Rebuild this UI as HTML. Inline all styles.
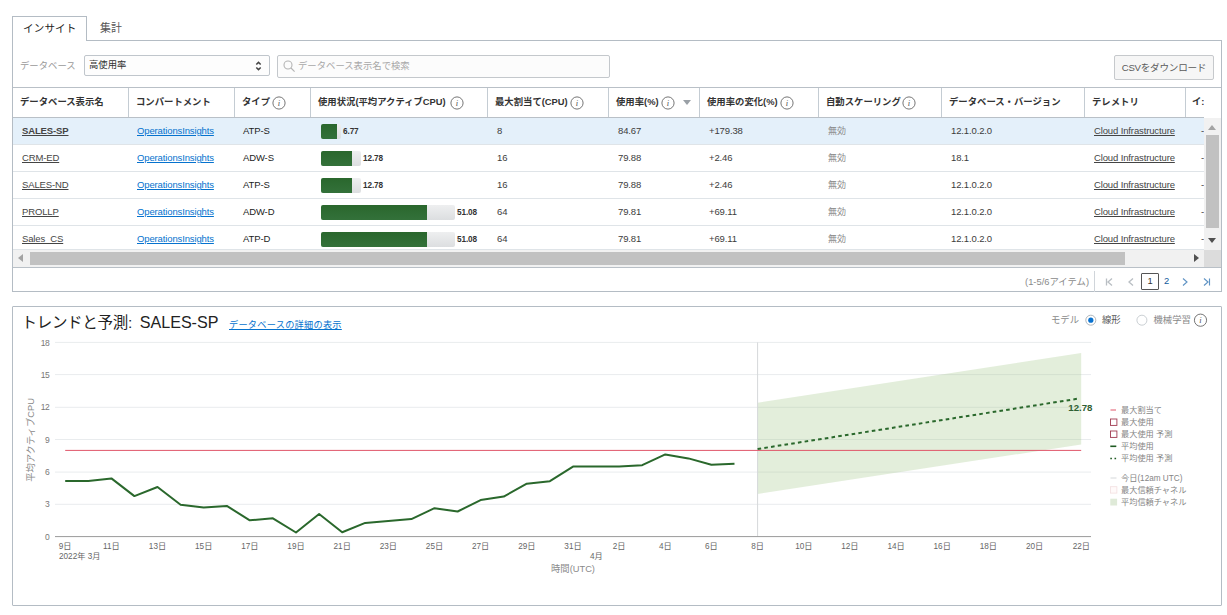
<!DOCTYPE html>
<html lang="ja">
<head>
<meta charset="utf-8">
<title>トレンドと予測</title>
<style>
*{box-sizing:border-box;margin:0;padding:0}
html,body{width:1227px;height:615px;background:#fff;overflow:hidden}
body{font-family:"Liberation Sans","Noto Sans CJK JP",sans-serif;font-size:9.35px;color:#333;position:relative}
.abs{position:absolute}
a{color:#0572ce;text-decoration:underline}
/* tabs */
#tab1{left:12px;top:16px;width:75px;height:25px;border:1px solid #b4bcc4;border-bottom:none;background:#fff;z-index:3;font-size:10.6px;color:#222;line-height:22px;padding-left:10px;letter-spacing:.1px}
#tab2{left:100px;top:16px;height:25px;font-size:10.9px;color:#555;line-height:24px}
#panel1{left:12px;top:40px;width:1210px;height:252px;border:1px solid #b4bcc4;background:#fff}
/* toolbar */
#lblDb{left:20px;top:59px;color:#9a9a9a;font-size:9.35px;line-height:14px}
#sel{left:84px;top:55px;width:186px;height:21px;border:1px solid #c0c6cc;border-radius:2px;background:#fdfdfd;font-size:9.35px;line-height:19px;padding-left:4px;color:#333}
#search{left:277px;top:55px;width:333px;height:23px;border:1px solid #c4c8cc;border-radius:2px;background:#fcfcfc;font-size:9.35px;line-height:21px;color:#a8a8a8;padding-left:20px}
#csv{left:1114px;top:55px;width:100px;height:25px;border:1px solid #c6c9cc;border-radius:2px;background:#f6f6f6;font-size:9.6px;letter-spacing:-.25px;line-height:23px;color:#5a5a5a;text-align:center}
/* table */
#thead{left:13px;top:87px;width:1191px;height:31px;border-top:1px solid #b9c0c7;border-bottom:1px solid #b9c0c7;background:#fff}
#theadtop{left:1204px;top:87px;width:17px;height:1px;background:#b9c0c7}
.th{position:absolute;top:0;height:29px;line-height:29px;font-weight:bold;font-size:9.35px;color:#333;border-left:1px solid #c4ccd3;padding-left:7px;white-space:nowrap;overflow:hidden}
.row{position:absolute;left:13px;width:1191px;height:27px;border-bottom:1px solid #dfe4e8;overflow:hidden}
.row.sel{background:#e4f0fa}
.td{position:absolute;top:0;height:26px;line-height:26px;white-space:nowrap;font-size:9.5px;letter-spacing:-.13px;color:#3c3c3c}
.td a.nm{color:#444}
.gray{color:#8a8a8a;font-size:9px;letter-spacing:0}
.bar{position:absolute;top:5.5px;height:15px;border-radius:2px;background:linear-gradient(#eeeff0,#dcdee0);overflow:hidden}
.bar i{position:absolute;left:0;top:0;bottom:0;background:linear-gradient(#2a672d,#33713a);display:block}
.bv{position:absolute;top:1px;font-weight:bold;font-size:8.2px;letter-spacing:-.1px;color:#333;line-height:26px}

/* scrollbars */
#vsb{left:1204px;top:118px;width:17px;height:132px;background:#f1f1f1}
#vsb .thumb{position:absolute;left:2px;top:17px;width:13px;height:93px;background:#c1c1c1}
#hsb{left:13px;top:250px;width:1191px;height:17px;background:#f1f1f1}
#hsb .thumb{position:absolute;left:17px;top:2px;width:1095px;height:13px;background:#c1c1c1}
#corner{left:1204px;top:250px;width:17px;height:17px;background:#dcdcdc}
.arr{position:absolute;width:0;height:0;border:4px solid transparent}
#pgline{left:13px;top:267px;width:1208px;height:1px;background:#b9c0c7}
#pgsep{left:1094px;top:271px;width:1px;height:21px;background:#d0d5da}
#pgtxt{left:1000px;top:275px;width:89px;text-align:right;color:#8a8a8a;font-size:9.35px;line-height:14px;white-space:nowrap}
#pg1{left:1141px;top:273px;width:18px;height:17px;border:1px solid #555;border-radius:1px;text-align:center;line-height:15px;font-size:9.35px;color:#333;background:#fff}
#pg2{left:1164px;top:273px;width:8px;line-height:17px;font-size:9.35px;color:#0f5b9c}
.ico{position:absolute}
#panel2{left:12px;top:306px;width:1210px;height:300px;border:1px solid #b4bcc4;background:#fff;border-radius:1px}
#ctitle{left:21.5px;top:311px;font-size:15.5px;line-height:22px;color:#222;white-space:nowrap}
#ctitle span{letter-spacing:-0.3px}
#ctitle em{font-style:normal;font-size:16.1px;margin-left:3.5px}
#clink{left:229px;top:318px;font-size:9.2px;line-height:14px;white-space:nowrap;letter-spacing:.25px}
#mdl{left:1051px;top:313px;color:#8a8a8a;line-height:14px;white-space:nowrap}
#r1t{left:1102px;top:313px;color:#555;line-height:14px;white-space:nowrap}
#r2t{left:1153.5px;top:313px;color:#8a8a8a;line-height:14px;white-space:nowrap}
/*ENDCHARTCSS*/
</style>
</head>
<body>
<div class="abs" id="tab1">インサイト</div>
<div class="abs" id="tab2">集計</div>
<div class="abs" id="panel1"></div>
<div class="abs" id="lblDb">データベース</div>
<div class="abs" id="sel">高使用率</div>
<div class="abs" id="search">データベース表示名で検索</div>
<div class="abs" id="csv">CSVをダウンロード</div>
<div class="abs" id="theadtop"></div>
<div class="abs" id="thead">
<div class="th" style="left:0;width:115px;border-left:none">データベース表示名</div>
<div class="th" style="left:115px;width:106px">コンパートメント</div>
<div class="th" style="left:221px;width:76px">タイプ</div>
<div class="th" style="left:297px;width:177px">使用状況(平均アクティブCPU)</div>
<div class="th" style="left:474px;width:121px">最大割当て(CPU)</div>
<div class="th" style="left:595px;width:91px">使用率(%)</div>
<div class="th" style="left:686px;width:119px">使用率の変化(%)</div>
<div class="th" style="left:805px;width:123px">自動スケーリング</div>
<div class="th" style="left:928px;width:143px">データベース・バージョン</div>
<div class="th" style="left:1071px;width:102px">テレメトリ</div>
<div class="th" style="left:1172px;width:19px;padding-left:6px">イ:</div>
</div>
<svg class="ico" style="left:272.4px;top:95.5px" width="14" height="14" viewBox="0 0 14 14"><circle cx="7" cy="7" r="6.1" fill="#fff" stroke="#666" stroke-width="0.9"/><text x="7" y="9.9" text-anchor="middle" font-family="Liberation Serif,serif" font-style="italic" font-size="8.5" fill="#555">i</text></svg>
<svg class="ico" style="left:449.6px;top:95.5px" width="14" height="14" viewBox="0 0 14 14"><circle cx="7" cy="7" r="6.1" fill="#fff" stroke="#666" stroke-width="0.9"/><text x="7" y="9.9" text-anchor="middle" font-family="Liberation Serif,serif" font-style="italic" font-size="8.5" fill="#555">i</text></svg>
<svg class="ico" style="left:570.4px;top:95.5px" width="14" height="14" viewBox="0 0 14 14"><circle cx="7" cy="7" r="6.1" fill="#fff" stroke="#666" stroke-width="0.9"/><text x="7" y="9.9" text-anchor="middle" font-family="Liberation Serif,serif" font-style="italic" font-size="8.5" fill="#555">i</text></svg>
<svg class="ico" style="left:660.5px;top:95.5px" width="14" height="14" viewBox="0 0 14 14"><circle cx="7" cy="7" r="6.1" fill="#fff" stroke="#666" stroke-width="0.9"/><text x="7" y="9.9" text-anchor="middle" font-family="Liberation Serif,serif" font-style="italic" font-size="8.5" fill="#555">i</text></svg>
<svg class="ico" style="left:780px;top:95.5px" width="14" height="14" viewBox="0 0 14 14"><circle cx="7" cy="7" r="6.1" fill="#fff" stroke="#666" stroke-width="0.9"/><text x="7" y="9.9" text-anchor="middle" font-family="Liberation Serif,serif" font-style="italic" font-size="8.5" fill="#555">i</text></svg>
<svg class="ico" style="left:901.6px;top:95.5px" width="14" height="14" viewBox="0 0 14 14"><circle cx="7" cy="7" r="6.1" fill="#fff" stroke="#666" stroke-width="0.9"/><text x="7" y="9.9" text-anchor="middle" font-family="Liberation Serif,serif" font-style="italic" font-size="8.5" fill="#555">i</text></svg>
<div class="arr abs" style="left:683px;top:100px;border-top:5px solid #9aa0a6;border-bottom:none"></div>
<svg class="ico" style="left:254px;top:60px" width="9" height="12" viewBox="0 0 9 12" fill="none" stroke="#444" stroke-width="1.5"><path d="M2.3 4.5L4.5 2.4l2.2 2.1M2.3 7.5L4.5 9.6l2.2-2.1"/></svg>
<svg class="ico" style="left:282px;top:59px" width="14" height="14" viewBox="0 0 14 14" fill="none" stroke="#b5b5b5" stroke-width="1.1"><circle cx="6" cy="6" r="4"/><path d="M9 9l3.6 3.6"/></svg>
<!--ROWS-->
<div class="row sel" style="top:118px;height:27px">
<div class="td" style="left:9px"><a class="nm"><b>SALES-SP</b></a></div>
<div class="td" style="left:124px"><a>OperationsInsights</a></div>
<div class="td" style="left:230px;color:#1c1c1c">ATP-S</div>
<div class="bar" style="left:307.7px;width:20px"><i style="width:16px"></i></div>
<div class="bv" style="left:330px">6.77</div>
<div class="td" style="left:484px">8</div>
<div class="td" style="left:605px">84.67</div>
<div class="td" style="left:696px">+179.38</div>
<div class="td gray" style="left:815px">無効</div>
<div class="td" style="left:938px">12.1.0.2.0</div>
<div class="td" style="left:1081px"><a class="nm">Cloud Infrastructure</a></div>
<div class="td" style="left:1188px">-</div>
</div>
<div class="row" style="top:145px;height:27px">
<div class="td" style="left:9px"><a class="nm">CRM-ED</a></div>
<div class="td" style="left:124px"><a>OperationsInsights</a></div>
<div class="td" style="left:230px;color:#1c1c1c">ADW-S</div>
<div class="bar" style="left:307.7px;width:40px"><i style="width:31px"></i></div>
<div class="bv" style="left:350px">12.78</div>
<div class="td" style="left:484px">16</div>
<div class="td" style="left:605px">79.88</div>
<div class="td" style="left:696px">+2.46</div>
<div class="td gray" style="left:815px">無効</div>
<div class="td" style="left:938px">18.1</div>
<div class="td" style="left:1081px"><a class="nm">Cloud Infrastructure</a></div>
<div class="td" style="left:1188px">-</div>
</div>
<div class="row" style="top:172px;height:27px">
<div class="td" style="left:9px"><a class="nm">SALES-ND</a></div>
<div class="td" style="left:124px"><a>OperationsInsights</a></div>
<div class="td" style="left:230px;color:#1c1c1c">ATP-S</div>
<div class="bar" style="left:307.7px;width:40px"><i style="width:31px"></i></div>
<div class="bv" style="left:350px">12.78</div>
<div class="td" style="left:484px">16</div>
<div class="td" style="left:605px">79.88</div>
<div class="td" style="left:696px">+2.46</div>
<div class="td gray" style="left:815px">無効</div>
<div class="td" style="left:938px">12.1.0.2.0</div>
<div class="td" style="left:1081px"><a class="nm">Cloud Infrastructure</a></div>
<div class="td" style="left:1188px">-</div>
</div>
<div class="row" style="top:199px;height:27px">
<div class="td" style="left:9px"><a class="nm">PROLLP</a></div>
<div class="td" style="left:124px"><a>OperationsInsights</a></div>
<div class="td" style="left:230px;color:#1c1c1c">ADW-D</div>
<div class="bar" style="left:307.7px;width:134px"><i style="width:106px"></i></div>
<div class="bv" style="left:444px">51.08</div>
<div class="td" style="left:484px">64</div>
<div class="td" style="left:605px">79.81</div>
<div class="td" style="left:696px">+69.11</div>
<div class="td gray" style="left:815px">無効</div>
<div class="td" style="left:938px">12.1.0.2.0</div>
<div class="td" style="left:1081px"><a class="nm">Cloud Infrastructure</a></div>
<div class="td" style="left:1188px">-</div>
</div>
<div class="row" style="top:226px;height:24px">
<div class="td" style="left:9px"><a class="nm">Sales_CS</a></div>
<div class="td" style="left:124px"><a>OperationsInsights</a></div>
<div class="td" style="left:230px;color:#1c1c1c">ATP-D</div>
<div class="bar" style="left:307.7px;width:134px"><i style="width:106px"></i></div>
<div class="bv" style="left:444px">51.08</div>
<div class="td" style="left:484px">64</div>
<div class="td" style="left:605px">79.81</div>
<div class="td" style="left:696px">+69.11</div>
<div class="td gray" style="left:815px">無効</div>
<div class="td" style="left:938px">12.1.0.2.0</div>
<div class="td" style="left:1081px"><a class="nm">Cloud Infrastructure</a></div>
<div class="td" style="left:1188px">-</div>
</div>
<!--/ROWS-->
<div class="abs" id="vsb"><div class="thumb"></div>
<div class="arr" style="left:4px;top:7px;border-bottom:5px solid #a3a3a3;border-top:none"></div>
<div class="arr" style="left:4px;top:120px;border-top:5px solid #505050;border-bottom:none"></div></div>
<div class="abs" id="hsb"><div class="thumb"></div>
<div class="arr" style="left:5px;top:4px;border-right:5px solid #a3a3a3;border-left:none"></div>
<div class="arr" style="left:1181px;top:4px;border-left:5px solid #505050;border-right:none"></div></div>
<div class="abs" id="corner"></div>
<div class="abs" id="pgline"></div>
<div class="abs" id="pgtxt">(1-5/6アイテム)</div>
<div class="abs" id="pgsep"></div>
<svg class="ico" style="left:1103px;top:276px" width="112" height="12" viewBox="0 0 112 12" fill="none" stroke-width="1.3">
<path d="M3.5 2.5v7M9 2.5L5 6l4 3.5" stroke="#b9bec3"/>
<path d="M30 2.5L26 6l4 3.5" stroke="#b9bec3"/>
<path d="M80 2.5L84 6l-4 3.5" stroke="#5f93c4" stroke-width="1.15"/>
<path d="M101 2.5l4 3.5-4 3.5M106.5 2.5v7" stroke="#5f93c4" stroke-width="1.15"/>
</svg>
<div class="abs" id="pg1">1</div>
<div class="abs" id="pg2">2</div>
<!--CHART-->
<div class="abs" id="panel2"></div>
<div class="abs" id="ctitle"><span>トレンドと予測:</span> <em>SALES-SP</em></div>
<a class="abs" id="clink">データベースの詳細の表示</a>
<div class="abs" id="mdl">モデル</div><div class="abs" id="r1t">線形</div><div class="abs" id="r2t">機械学習</div>
<svg class="ico" style="left:0;top:300px" width="1227" height="315" viewBox="0 300 1227 315" font-family="Liberation Sans,Noto Sans CJK JP,sans-serif">
<line x1="55" x2="1091" y1="342.4" y2="342.4" stroke="#e9ecee" stroke-width="1"/>
<line x1="55" x2="1091" y1="374.6" y2="374.6" stroke="#e9ecee" stroke-width="1"/>
<line x1="55" x2="1091" y1="407.3" y2="407.3" stroke="#e9ecee" stroke-width="1"/>
<line x1="55" x2="1091" y1="439.5" y2="439.5" stroke="#e9ecee" stroke-width="1"/>
<line x1="55" x2="1091" y1="472.1" y2="472.1" stroke="#e9ecee" stroke-width="1"/>
<line x1="55" x2="1091" y1="504.3" y2="504.3" stroke="#e9ecee" stroke-width="1"/>
<polygon points="757.6,402.8 1081.2,353 1081.2,444.4 757.6,494" fill="rgb(162,198,135)" fill-opacity="0.3"/>
<line x1="757.6" x2="757.6" y1="342.4" y2="536.4" stroke="#d5d8da" stroke-width="1"/>
<line x1="55" x2="1091" y1="536.6" y2="536.6" stroke="#9a9a9a" stroke-width="1"/>
<line x1="65.2" x2="1081.2" y1="450.4" y2="450.4" stroke="#e0566a" stroke-width="1"/>
<polyline points="65.2,480.9 88.3,480.9 111.4,478.4 134.4,496.1 157.5,487.0 180.6,504.7 203.7,507.5 226.8,505.9 249.8,520.3 272.9,518.3 296.0,532.5 319.1,514.0 342.2,532.2 365.2,522.9 388.3,521.1 411.4,519.1 434.5,508.2 457.6,511.5 480.6,500.1 503.7,496.6 526.8,483.7 549.9,481.2 573.0,466.6 596.0,466.6 619.1,466.6 642.2,465.2 665.3,454.4 688.4,458.4 711.4,464.7 734.5,463.7" fill="none" stroke="#2a682c" stroke-width="2" stroke-linejoin="round"/>
<line x1="757.6" y1="449" x2="1078.5" y2="398.6" stroke="#2a682c" stroke-width="2" stroke-dasharray="3.6,3.2"/>
<text x="1092.5" y="411.3" text-anchor="end" font-size="9.7" font-weight="bold" fill="#2f5f33">12.78</text>
<text x="49.5" y="345.5" text-anchor="end" font-size="8.5" letter-spacing="-0.3" fill="#777">18</text>
<text x="49.5" y="377.7" text-anchor="end" font-size="8.5" letter-spacing="-0.3" fill="#777">15</text>
<text x="49.5" y="410.4" text-anchor="end" font-size="8.5" letter-spacing="-0.3" fill="#777">12</text>
<text x="49.5" y="442.6" text-anchor="end" font-size="8.5" letter-spacing="-0.3" fill="#777">9</text>
<text x="49.5" y="475.2" text-anchor="end" font-size="8.5" letter-spacing="-0.3" fill="#777">6</text>
<text x="49.5" y="507.4" text-anchor="end" font-size="8.5" letter-spacing="-0.3" fill="#777">3</text>
<text x="49.5" y="539.5" text-anchor="end" font-size="8.5" letter-spacing="-0.3" fill="#777">0</text>
<text transform="translate(33.5,440) rotate(-90)" text-anchor="middle" font-size="9.3" fill="#8a8a8a">平均アクティブCPU</text>
<text x="65.2" y="549.3" text-anchor="middle" font-size="8.2" fill="#666">9日</text>
<text x="111.4" y="549.3" text-anchor="middle" font-size="8.2" fill="#666">11日</text>
<text x="157.5" y="549.3" text-anchor="middle" font-size="8.2" fill="#666">13日</text>
<text x="203.7" y="549.3" text-anchor="middle" font-size="8.2" fill="#666">15日</text>
<text x="249.8" y="549.3" text-anchor="middle" font-size="8.2" fill="#666">17日</text>
<text x="296.0" y="549.3" text-anchor="middle" font-size="8.2" fill="#666">19日</text>
<text x="342.2" y="549.3" text-anchor="middle" font-size="8.2" fill="#666">21日</text>
<text x="388.3" y="549.3" text-anchor="middle" font-size="8.2" fill="#666">23日</text>
<text x="434.5" y="549.3" text-anchor="middle" font-size="8.2" fill="#666">25日</text>
<text x="480.6" y="549.3" text-anchor="middle" font-size="8.2" fill="#666">27日</text>
<text x="526.8" y="549.3" text-anchor="middle" font-size="8.2" fill="#666">29日</text>
<text x="573.0" y="549.3" text-anchor="middle" font-size="8.2" fill="#666">31日</text>
<text x="619.1" y="549.3" text-anchor="middle" font-size="8.2" fill="#666">2日</text>
<text x="665.3" y="549.3" text-anchor="middle" font-size="8.2" fill="#666">4日</text>
<text x="711.4" y="549.3" text-anchor="middle" font-size="8.2" fill="#666">6日</text>
<text x="757.6" y="549.3" text-anchor="middle" font-size="8.2" fill="#666">8日</text>
<text x="803.8" y="549.3" text-anchor="middle" font-size="8.2" fill="#666">10日</text>
<text x="849.9" y="549.3" text-anchor="middle" font-size="8.2" fill="#666">12日</text>
<text x="896.1" y="549.3" text-anchor="middle" font-size="8.2" fill="#666">14日</text>
<text x="942.2" y="549.3" text-anchor="middle" font-size="8.2" fill="#666">16日</text>
<text x="988.4" y="549.3" text-anchor="middle" font-size="8.2" fill="#666">18日</text>
<text x="1034.6" y="549.3" text-anchor="middle" font-size="8.2" fill="#666">20日</text>
<text x="1090" y="549.3" text-anchor="end" font-size="8.2" fill="#666">22日</text>
<text x="59" y="558.8" font-size="8.2" fill="#666">2022年 3月</text>
<text x="596.3" y="558.8" text-anchor="middle" font-size="8.2" fill="#666">4月</text>
<text x="573" y="572.3" text-anchor="middle" font-size="9.3" fill="#8a8a8a">時間(UTC)</text>
<line x1="1110.5" x2="1116" y1="410" y2="410" stroke="#e0566a" stroke-width="1"/>
<text x="1121" y="412.9" font-size="8.2" fill="#858585">最大割当て</text>
<rect x="1110.5" y="419.0" width="6.4" height="6.4" fill="#fff" stroke="#a03a50" stroke-width="0.9"/>
<text x="1121" y="425.2" font-size="8.2" fill="#858585">最大使用</text>
<rect x="1110.5" y="431.0" width="6.4" height="6.4" fill="#fff" stroke="#a03a50" stroke-width="0.9"/>
<text x="1121" y="437.2" font-size="8.2" fill="#858585">最大使用 予測</text>
<line x1="1110.3" x2="1116.3" y1="446.3" y2="446.3" stroke="#1f5a22" stroke-width="1.6"/>
<text x="1121" y="449.2" font-size="8.2" fill="#858585">平均使用</text>
<line x1="1110.3" x2="1116.6" y1="458.5" y2="458.5" stroke="#1f5a22" stroke-width="1.6" stroke-dasharray="1.6,2.6"/>
<text x="1121" y="460.8" font-size="8.2" fill="#858585">平均使用 予測</text>
<line x1="1110.5" x2="1116.5" y1="478" y2="478" stroke="#d5d8da" stroke-width="1"/>
<text x="1121" y="480.9" font-size="8.2" fill="#858585">今日(12am UTC)</text>
<rect x="1110.5" y="486.7" width="6.4" height="6.4" fill="#fffafa" stroke="#f3dfe0" stroke-width="0.8"/>
<text x="1121" y="492.9" font-size="8.2" fill="#858585">最大信頼チャネル</text>
<rect x="1110.3" y="498.7" width="6.8" height="6.8" fill="#dfead8"/>
<text x="1121" y="505.1" font-size="8.2" fill="#858585">平均信頼チャネル</text>
<circle cx="1090.8" cy="320.2" r="5" fill="#fff" stroke="#a9b0b6" stroke-width="0.9"/><circle cx="1090.8" cy="320.2" r="2.6" fill="#0a72cf"/>
<circle cx="1141.9" cy="320.2" r="5" fill="#fff" stroke="#c4c9ce" stroke-width="0.9"/>
<circle cx="1200.5" cy="320.2" r="6.1" fill="#fff" stroke="#666" stroke-width="0.9"/><text x="1200.5" y="323.1" text-anchor="middle" font-family="Liberation Serif,serif" font-style="italic" font-size="8.5" fill="#555">i</text>
</svg>
<!--/CHART-->
</body>
</html>
